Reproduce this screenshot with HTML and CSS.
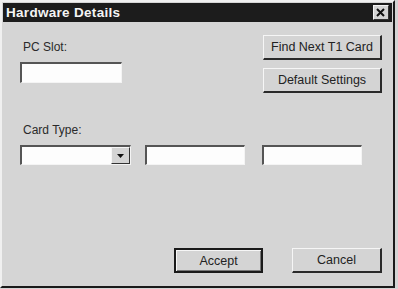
FILE: index.html
```html
<!DOCTYPE html>
<html lang="en">
<head>
    <meta charset="UTF-8">
    <meta name="viewport" content="width=device-width, initial-scale=1.0">
    <title>Hardware Details</title>
    <link rel="stylesheet" href="styles.css">
</head>
<body>
    <div class="window">
        <div class="titlebar">
            <span class="title">Hardware Details</span>
            <span class="close-btn">
                <svg width="10" height="9" viewBox="0 0 10 9">
                    <path d="M1 1 L8 8 M8 1 L1 8" stroke="#111" stroke-width="2" fill="none"/>
                </svg>
            </span>
        </div>

        <div class="content">
            <div class="top-row">
                <div class="slot-group">
                    <div class="label">PC Slot:</div>
                    <div class="field slot-field"></div>
                </div>
                <div class="side-buttons">
                    <div class="btn">Find Next T1 Card</div>
                    <div class="btn">Default Settings</div>
                </div>
            </div>

            <div class="card-group">
                <div class="label">Card Type:</div>
                <div class="card-row">
                    <div class="field combo">
                        <span class="combo-arrow">
                            <svg width="7" height="4" viewBox="0 0 7 4"><path d="M0 0 H7 L3.5 4 Z" fill="#111"/></svg>
                        </span>
                    </div>
                    <div class="field card-field"></div>
                    <div class="field card-field"></div>
                </div>
            </div>

            <div class="bottom-row">
                <div class="btn btn-default">Accept</div>
                <div class="btn btn-cancel">Cancel</div>
            </div>
        </div>
    </div>
</body>
</html>
```

FILE: styles.css
```css
body {
    margin: 0;
    background: #d4d4d4;
    font-family: "Liberation Sans", Arial, sans-serif;
    font-size: 12px;
    color: #1e1e1e;
}
.window {
    width: 395px;
    height: 288px;
    box-sizing: border-box;
    background: #d5d5d5;
    border-top: 2px solid #f0f0f0;
    border-left: 2px solid #f0f0f0;
    border-right: 2px solid #1a1a1a;
    border-bottom: 2px solid #1a1a1a;
    padding: 1px;
    display: flex;
    flex-direction: column;
}
.titlebar {
    height: 19px;
    background: #1c1c1c;
    display: flex;
    align-items: center;
    justify-content: space-between;
    padding: 0 3px 0 3px;
}
.title {
    color: #f4f4f4;
    font-weight: bold;
    font-size: 13.5px;
    letter-spacing: 0.3px;
}
.close-btn {
    width: 16px;
    height: 15px;
    box-sizing: border-box;
    background: #d4d4d4;
    border-top: 1px solid #f4f4f4;
    border-left: 1px solid #f4f4f4;
    border-right: 1px solid #333;
    border-bottom: 1px solid #333;
    display: flex;
    align-items: center;
    justify-content: center;
}
.content {
    flex: 1;
    display: flex;
    flex-direction: column;
    padding: 0 10px 12px 17px;
}
.top-row {
    display: flex;
    justify-content: space-between;
}
.slot-group {
    padding-top: 18px;
}
.label {
    line-height: 14px;
    padding-left: 3px;
    color: #2a2a2a;
}
.field {
    box-sizing: border-box;
    background: #fdfdfd;
    border-top: 2px solid #555;
    border-left: 2px solid #555;
    border-right: 1px solid #f4f4f4;
    border-bottom: 1px solid #f4f4f4;
}
.slot-field {
    width: 102px;
    height: 21px;
    margin-top: 8px;
}
.side-buttons {
    display: flex;
    flex-direction: column;
    gap: 8px;
    padding-top: 13px;
}
.btn {
    box-sizing: border-box;
    height: 25px;
    width: 119px;
    background: #d4d4d4;
    border-top: 1px solid #f6f6f6;
    border-left: 1px solid #f6f6f6;
    border-right: 2px solid #2a2a2a;
    border-bottom: 2px solid #2a2a2a;
    display: flex;
    align-items: center;
    justify-content: center;
    font-size: 12.5px;
    color: #222;
}
.card-group {
    padding-top: 30px;
}
.card-row {
    display: flex;
    margin-top: 8px;
}
.combo {
    width: 111px;
    height: 20px;
    display: flex;
    justify-content: flex-end;
    align-items: stretch;
}
.combo-arrow {
    width: 17px;
    background: #d4d4d4;
    border-top: 1px solid #f6f6f6;
    border-left: 1px solid #f6f6f6;
    border-right: 1px solid #333;
    border-bottom: 1px solid #333;
    display: flex;
    align-items: center;
    justify-content: center;
}
.card-field {
    width: 100px;
    height: 20px;
    margin-left: 14px;
}
.card-field + .card-field {
    margin-left: 17px;
}
.bottom-row {
    margin-top: auto;
    display: flex;
    justify-content: flex-end;
    gap: 29px;
}
.btn-default {
    width: 89px;
    border: 2px solid #1a1a1a;
    box-shadow: inset 1px 1px 0 #f6f6f6, inset -1px -1px 0 #777;
}
.btn-cancel {
    width: 90px;
}
```
